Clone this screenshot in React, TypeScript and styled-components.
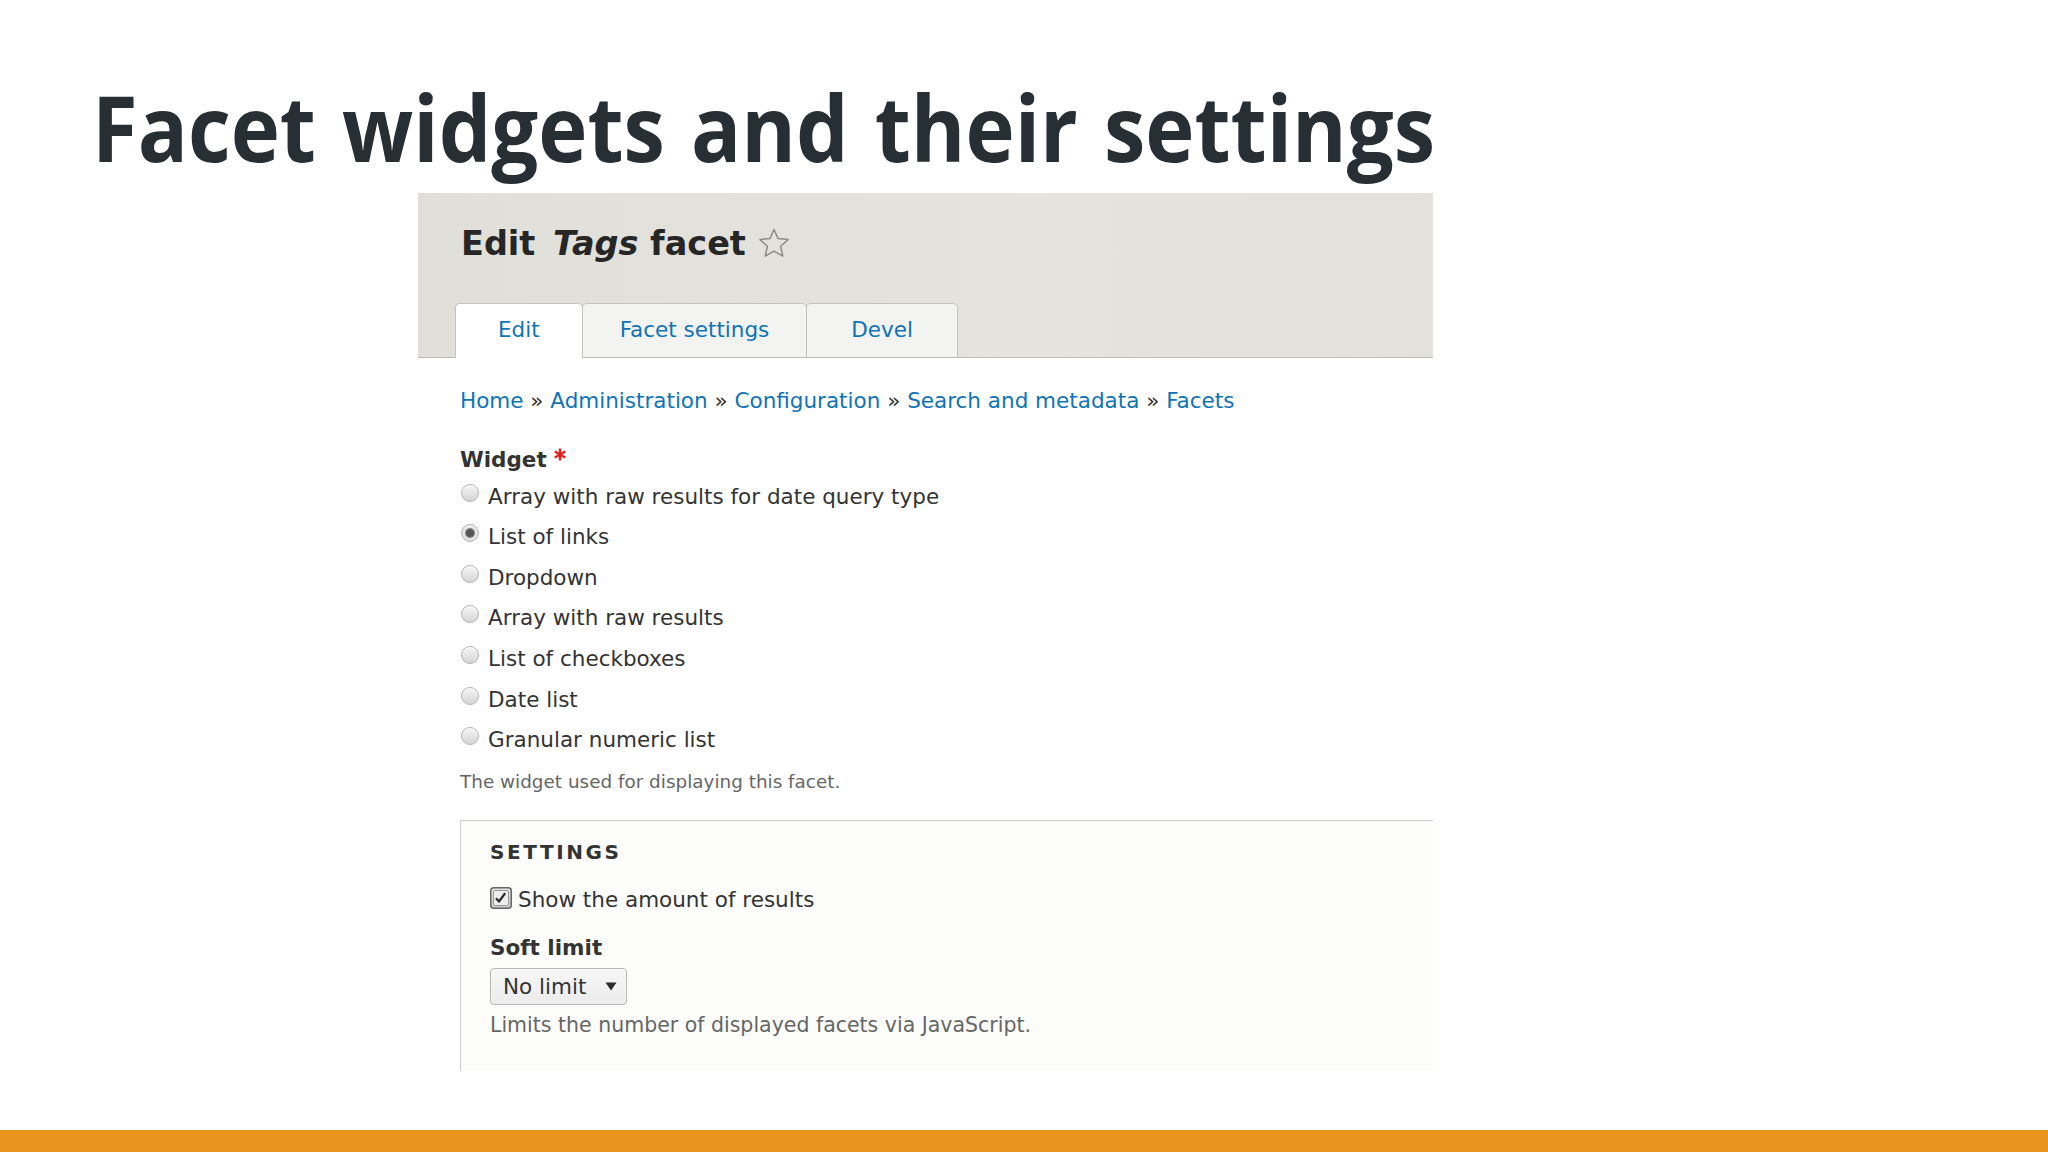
import React from "react";
import styled, { createGlobalStyle } from "styled-components";

const GlobalStyle = createGlobalStyle`
  html, body { margin: 0; padding: 0; background: #ffffff; }
  body { width: 2048px; height: 1152px; overflow: hidden; }
  #root { height: 100%; }
`;

const Slide = styled.div`
  width: 2048px;
  height: 1152px;
  display: flex;
  flex-direction: column;
  background: #ffffff;
`;

const SlideTitle = styled.h1`
  margin: 0;
  padding: 82px 0 0 92px;
  font-family: "Open Sans", sans-serif;
  font-weight: 700;
  font-size: 91px;
  line-height: 91px;
  word-spacing: 5px;
  color: #272e34;
  white-space: nowrap;
  transform: scaleX(0.914);
  transform-origin: 92px 0;
`;

const Panel = styled.section`
  margin: 20px 0 0 418px;
  width: 1015px;
  height: 878px;
  overflow: hidden;
  background: #ffffff;
  font-family: "DejaVu Sans", sans-serif;
  font-size: 21.5px;
  color: #333333;
  display: flex;
  flex-direction: column;
`;

const Header = styled.header`
  height: 165px;
  box-sizing: border-box;
  flex: none;
  background: linear-gradient(90deg, #e0dfda 0%, #e4e3de 60%, #e2e1dc 100%);
  border-bottom: 1px solid #bdbdb8;
  display: flex;
  flex-direction: column;
  padding: 32px 0 0 37px;
`;

const PageTitle = styled.h2`
  margin: 0 0 0 6px;
  font-size: 33.5px;
  line-height: 38px;
  font-weight: 700;
  color: #262626;
  display: flex;
  align-items: center;
  white-space: pre;
`;

const Placeholder = styled.em`
  font-style: italic;
  margin-left: 6px;
`;

const Star = styled.svg`
  width: 36px;
  height: 36px;
  margin-left: 10px;
  flex: none;
`;

const TabRow = styled.nav`
  margin-top: auto;
  margin-bottom: -1px;
  display: flex;
`;

const Tab = styled.a<{ $active?: boolean; $pad: number }>`
  height: 55px;
  box-sizing: border-box;
  padding: 0 ${(p) => p.$pad}px 2px;
  display: flex;
  align-items: center;
  border: 1px solid #c3c3be;
  border-bottom: ${(p) => (p.$active ? "1px solid #ffffff" : "1px solid #bdbdb8")};
  border-radius: 5px 5px 0 0;
  background: ${(p) => (p.$active ? "#ffffff" : "#f3f3f1")};
  color: #0f74b5;
  font-size: 21.5px;
  text-decoration: none;
  & + & {
    margin-left: -1px;
  }
`;

const Content = styled.main`
  flex: 1;
  padding: 30px 0 0 42px;
  display: flex;
  flex-direction: column;
`;

const Breadcrumb = styled.div`
  line-height: 25px;
  color: #333333;
  white-space: pre;
`;

const Crumb = styled.a`
  color: #0f74b5;
  text-decoration: none;
`;

const FieldLabel = styled.div<{ $top: number }>`
  margin-top: ${(p) => p.$top}px;
  display: flex;
  align-items: flex-start;
  font-weight: 700;
  line-height: 25px;
  color: #333333;
`;

const Required = styled.svg`
  width: 12px;
  height: 13px;
  margin: 1px 0 0 7px;
  flex: none;
`;

const RadioList = styled.div`
  margin-top: 12px;
  display: flex;
  flex-direction: column;
  gap: 15.67px;
`;

const OptionRow = styled.label`
  display: flex;
  align-items: flex-start;
  line-height: 25px;
  color: #333333;
`;

const RadioDot = styled.span<{ $checked?: boolean }>`
  width: 18px;
  height: 18px;
  box-sizing: border-box;
  margin: 0 9px 0 1px;
  border-radius: 50%;
  border: 1px solid #b3b3b3;
  background: ${(p) =>
    p.$checked
      ? "radial-gradient(circle, #555555 0, #555555 3.5px, #8a8a8a 4.5px, #e6e6e6 5.5px, #d2d2d2 100%)"
      : "linear-gradient(180deg, #f6f6f6 0%, #e2e2e2 60%, #d4d4d4 100%)"};
  box-shadow: inset 0 1px 1px rgba(255, 255, 255, 0.8);
  flex: none;
`;

const Description = styled.div<{ $size: number; $top: number }>`
  margin-top: ${(p) => p.$top}px;
  font-size: ${(p) => p.$size}px;
  line-height: ${(p) => Math.round(p.$size * 1.18)}px;
  color: #666666;
`;

const Fieldset = styled.div`
  flex: 1;
  margin-top: 27px;
  border-top: 1px solid #cfcfcc;
  border-left: 1px solid #cfcfcc;
  background: #fcfcfb;
  padding: 19px 0 0 29px;
  display: flex;
  flex-direction: column;
`;

const Legend = styled.div`
  font-size: 20px;
  line-height: 24px;
  font-weight: 700;
  letter-spacing: 2.6px;
  text-transform: uppercase;
  color: #333333;
`;

const CheckRow = styled.label`
  margin-top: 23.5px;
  display: flex;
  align-items: flex-start;
  line-height: 25px;
  color: #333333;
`;

const CheckBox = styled.svg`
  width: 22px;
  height: 22px;
  margin-right: 6px;
  flex: none;
`;

const Select = styled.div`
  margin-top: 7.5px;
  align-self: flex-start;
  height: 37px;
  width: 137px;
  box-sizing: border-box;
  border: 1px solid #b9b9b9;
  border-radius: 4px;
  background: linear-gradient(180deg, #f7f7f7 0%, #ececec 100%);
  display: flex;
  align-items: center;
  justify-content: space-between;
  padding: 0 9px 0 12px;
  color: #333333;
  line-height: 25px;
`;

const Caret = styled.svg`
  width: 12px;
  height: 9px;
  flex: none;
`;

const BottomBar = styled.div`
  margin-top: auto;
  height: 22px;
  background: #e8941f;
  flex: none;
`;

const radioOptions = [
  { label: "Array with raw results for date query type", checked: false },
  { label: "List of links", checked: true },
  { label: "Dropdown", checked: false },
  { label: "Array with raw results", checked: false },
  { label: "List of checkboxes", checked: false },
  { label: "Date list", checked: false },
  { label: "Granular numeric list", checked: false },
];

const crumbs = ["Home", "Administration", "Configuration", "Search and metadata", "Facets"];

export default function App() {
  return (
    <>
      <GlobalStyle />
      <Slide>
        <SlideTitle>Facet widgets and their settings</SlideTitle>
        <Panel>
          <Header>
            <PageTitle>
              Edit <Placeholder>Tags</Placeholder> facet
              <Star viewBox="0 0 24 24">
                <path
                  d="M12 2.3l2.75 6.1 6.65.65-5 4.45 1.45 6.55L12 16.7l-5.85 3.35 1.45-6.55-5-4.45 6.65-.65z"
                  fill="none"
                  stroke="#8c8c88"
                  strokeWidth="1"
                  strokeLinejoin="round"
                />
              </Star>
            </PageTitle>
            <TabRow>
              <Tab $active $pad={42}>Edit</Tab>
              <Tab $pad={37}>Facet settings</Tab>
              <Tab $pad={44}>Devel</Tab>
            </TabRow>
          </Header>
          <Content>
            <Breadcrumb>
              {crumbs.map((c, i) => (
                <React.Fragment key={c}>
                  {i > 0 && " » "}
                  <Crumb>{c}</Crumb>
                </React.Fragment>
              ))}
            </Breadcrumb>
            <FieldLabel $top={33.5}>
              Widget
              <Required viewBox="0 0 12 13">
                <g stroke="#e3201b" strokeWidth="2.4" strokeLinecap="butt">
                  <line x1="6" y1="0.5" x2="6" y2="12.5" />
                  <line x1="0.8" y1="3.5" x2="11.2" y2="9.5" />
                  <line x1="0.8" y1="9.5" x2="11.2" y2="3.5" />
                </g>
              </Required>
            </FieldLabel>
            <RadioList>
              {radioOptions.map((o) => (
                <OptionRow key={o.label}>
                  <RadioDot $checked={o.checked} />
                  {o.label}
                </OptionRow>
              ))}
            </RadioList>
            <Description $size={18.4} $top={18.5}>
              The widget used for displaying this facet.
            </Description>
            <Fieldset>
              <Legend>Settings</Legend>
              <CheckRow>
                <CheckBox viewBox="0 0 22 22">
                  <defs>
                    <linearGradient id="cbg" x1="0" y1="0" x2="0" y2="1">
                      <stop offset="0" stopColor="#e4e4e4" />
                      <stop offset="1" stopColor="#c8c8c8" />
                    </linearGradient>
                  </defs>
                  <rect x="0.75" y="0.75" width="20.5" height="20.5" rx="3" fill="url(#cbg)" stroke="#666666" strokeWidth="1.5" />
                  <rect x="3.5" y="3.5" width="15" height="15" rx="1.5" fill="#eeeeee" stroke="#9a9a9a" strokeWidth="1" />
                  <path d="M6 11.2l3 3.3 6.2-8.4" fill="none" stroke="#2e2e2e" strokeWidth="2.4" strokeLinejoin="round" />
                </CheckBox>
                Show the amount of results
              </CheckRow>
              <FieldLabel $top={23}>Soft limit</FieldLabel>
              <Select>
                <span>No limit</span>
                <Caret viewBox="0 0 12 9">
                  <path d="M0.5 0.5h11L6 8.5z" fill="#2b2b2b" />
                </Caret>
              </Select>
              <Description $size={20.5} $top={8}>
                Limits the number of displayed facets via JavaScript.
              </Description>
            </Fieldset>
          </Content>
        </Panel>
        <BottomBar />
      </Slide>
    </>
  );
}
